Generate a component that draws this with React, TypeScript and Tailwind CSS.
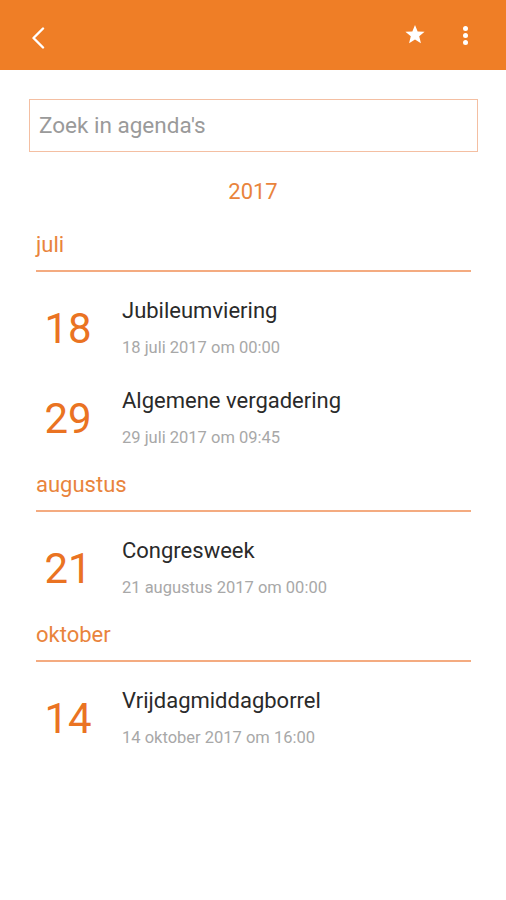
import React from 'react'

const months = [
  {
    name: 'juli',
    events: [
      { day: '18', title: 'Jubileumviering', when: '18 juli 2017 om 00:00' },
      { day: '29', title: 'Algemene vergadering', when: '29 juli 2017 om 09:45' },
    ],
  },
  {
    name: 'augustus',
    events: [{ day: '21', title: 'Congresweek', when: '21 augustus 2017 om 00:00' }],
  },
  {
    name: 'oktober',
    events: [{ day: '14', title: 'Vrijdagmiddagborrel', when: '14 oktober 2017 om 16:00' }],
  },
]

function Header() {
  return (
    <div className="h-[70px] bg-[#ef7e26] flex items-center relative">
      <svg className="absolute left-[31px] top-[27px]" width="14" height="22" viewBox="0 0 14 22" fill="none">
        <path d="M12 1.5 L2.5 11 L12 20.5" stroke="white" strokeWidth="2.4" strokeLinecap="round" strokeLinejoin="round" />
      </svg>
      <svg className="absolute left-[404px] top-[24px]" width="22" height="21" viewBox="0 0 24 23" fill="white">
        <path d="M12 1 L14.9 8.1 L22.5 8.6 L16.6 13.5 L18.5 21 L12 16.9 L5.5 21 L7.4 13.5 L1.5 8.6 L9.1 8.1 Z" />
      </svg>
      <div className="absolute left-[463px] top-[26px] flex flex-col gap-[2.5px]">
        <div className="w-[4.5px] h-[4.5px] rounded-full bg-white" />
        <div className="w-[4.5px] h-[4.5px] rounded-full bg-white" />
        <div className="w-[4.5px] h-[4.5px] rounded-full bg-white" />
      </div>
    </div>
  )
}

export default function App() {
  return (
    <div className="w-[506px] h-[900px] bg-white overflow-hidden" style={{ fontFamily: 'Roboto, "Noto Sans", sans-serif' }}>
      <Header />
      <div className="mt-[29px] ml-[29px] mr-[28px] h-[53px] border border-[#f4bfa2] flex items-center px-[9px]">
        <span className="text-[22.5px] text-[#9a9a9a]">Zoek in agenda's</span>
      </div>
      <div className="mt-[26px] text-center text-[22px] leading-[28px] text-[#e9843c]">2017</div>
      <div className="pl-[36px] pr-[35px] pt-[6px] flex flex-col">
        {months.map((month) => (
          <div key={month.name} className="mt-[19px]">
            <div className="text-[22px] leading-[28px] text-[#e9843c]">{month.name}</div>
            <div className="mt-[11px] h-[2px] bg-[#f4ab80]" />
            {month.events.map((event) => (
              <div key={event.day} className="flex items-center pt-[25px] pb-[2px]">
                <div className="w-[64px] text-center text-[42px] leading-[48px] text-[#ea7322]">{event.day}</div>
                <div className="ml-[22px] flex flex-col">
                  <div className="text-[22px] leading-[28px] text-[#2a2a2a]">{event.title}</div>
                  <div className="mt-[11px] text-[16.5px] leading-[24px] text-[#a8a8a8]">{event.when}</div>
                </div>
              </div>
            ))}
          </div>
        ))}
      </div>
    </div>
  )
}
